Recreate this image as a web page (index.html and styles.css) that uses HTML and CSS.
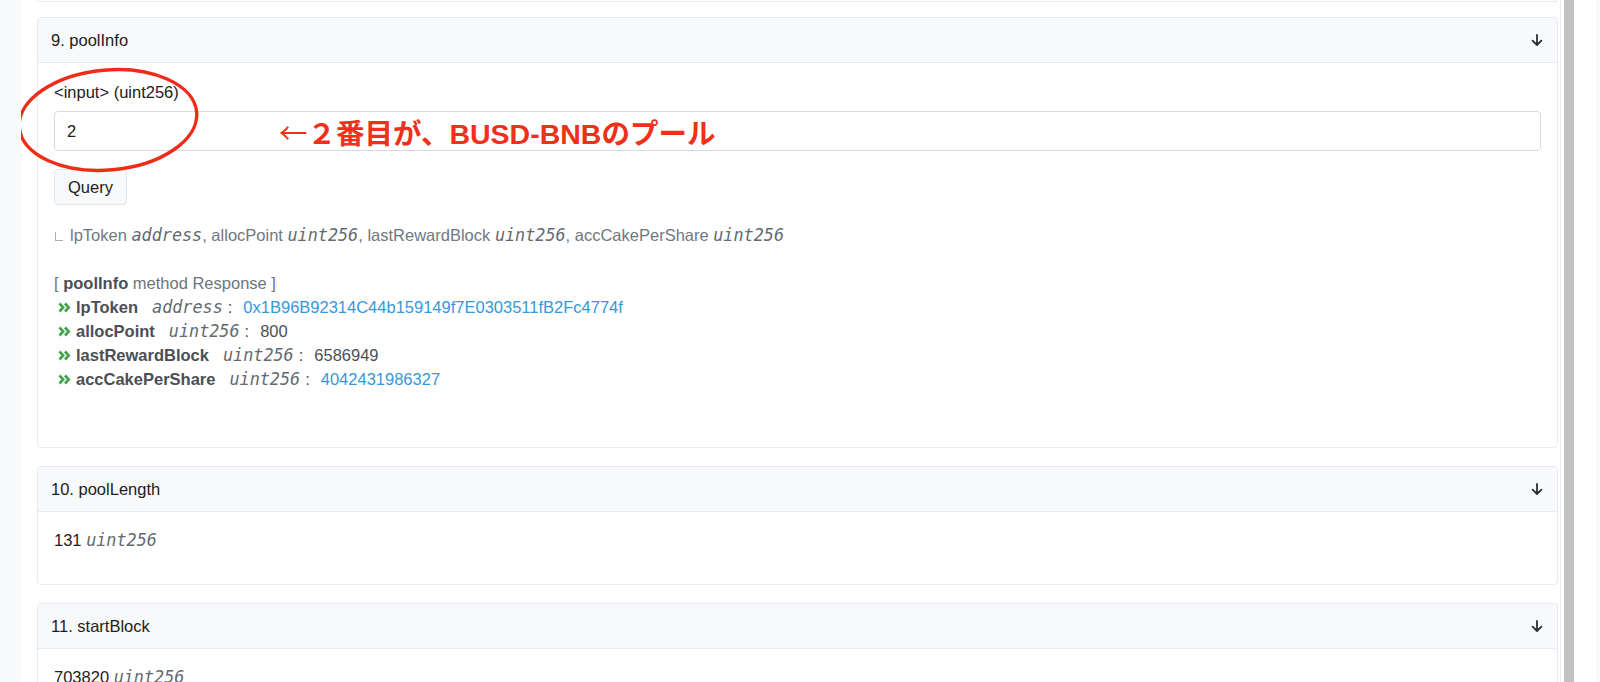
FILE: index.html
```html
<!DOCTYPE html>
<html lang="ja">
<head>
<meta charset="utf-8">
<title>Read Contract</title>
<link rel="stylesheet" href="styles.css">
</head>
<body>
<div class="page">
  <div class="content">
    <div class="card-prev"></div>

    <div class="card card-pool">
      <div class="card-head">
        <span>9. poolInfo</span>
        <svg class="arrow" width="12" height="12" viewBox="0 0 12 12"><path d="M6 1V11M1.6 6.6L6 11L10.4 6.6" fill="none" stroke="#2b2f33" stroke-width="1.8" stroke-linecap="round" stroke-linejoin="round"/></svg>
      </div>
      <div class="card-body body-pool">
        <div class="label">&lt;input&gt; (uint256)</div>
        <div class="input">2</div>
        <div class="btn">Query</div>
        <div class="sig"><span class="corner"></span>lpToken <i class="mono">address</i>, allocPoint <i class="mono">uint256</i>, lastRewardBlock <i class="mono">uint256</i>, accCakePerShare <i class="mono">uint256</i></div>
        <div class="blank"></div>
        <div class="resp-head">[ <b>poolInfo</b> method Response ]</div>
        <div class="row"><svg class="chev" width="13" height="11" viewBox="0 0 13 11"><path d="M1.5 1.5L5.2 5.5L1.5 9.5M7 1.5L10.7 5.5L7 9.5" fill="none" stroke="#3fa34d" stroke-width="2.6"/></svg><b class="rname">lpToken</b><i class="mono ty">address</i><span class="colon">:</span><span class="link">0x1B96B92314C44b159149f7E0303511fB2Fc4774f</span></div>
        <div class="row"><svg class="chev" width="13" height="11" viewBox="0 0 13 11"><path d="M1.5 1.5L5.2 5.5L1.5 9.5M7 1.5L10.7 5.5L7 9.5" fill="none" stroke="#3fa34d" stroke-width="2.6"/></svg><b class="rname">allocPoint</b><i class="mono ty">uint256</i><span class="colon">:</span><span class="val">800</span></div>
        <div class="row"><svg class="chev" width="13" height="11" viewBox="0 0 13 11"><path d="M1.5 1.5L5.2 5.5L1.5 9.5M7 1.5L10.7 5.5L7 9.5" fill="none" stroke="#3fa34d" stroke-width="2.6"/></svg><b class="rname">lastRewardBlock</b><i class="mono ty">uint256</i><span class="colon">:</span><span class="val">6586949</span></div>
        <div class="row"><svg class="chev" width="13" height="11" viewBox="0 0 13 11"><path d="M1.5 1.5L5.2 5.5L1.5 9.5M7 1.5L10.7 5.5L7 9.5" fill="none" stroke="#3fa34d" stroke-width="2.6"/></svg><b class="rname">accCakePerShare</b><i class="mono ty">uint256</i><span class="colon">:</span><span class="link">4042431986327</span></div>
      </div>
      <svg class="ring" width="200" height="120" viewBox="0 0 200 120"><ellipse cx="100" cy="60" rx="89" ry="50" transform="rotate(-5 100 60)" fill="none" stroke="#ee2c18" stroke-width="3.4"/></svg>
      <div class="note"><span class="note-arrow">←</span>２番目が、BUSD-BNBのプール</div>
    </div>

    <div class="card card-len">
      <div class="card-head">
        <span>10. poolLength</span>
        <svg class="arrow" width="12" height="12" viewBox="0 0 12 12"><path d="M6 1V11M1.6 6.6L6 11L10.4 6.6" fill="none" stroke="#2b2f33" stroke-width="1.8" stroke-linecap="round" stroke-linejoin="round"/></svg>
      </div>
      <div class="card-body body-len">131 <i class="mono">uint256</i></div>
    </div>

    <div class="card card-start">
      <div class="card-head">
        <span>11. startBlock</span>
        <svg class="arrow" width="12" height="12" viewBox="0 0 12 12"><path d="M6 1V11M1.6 6.6L6 11L10.4 6.6" fill="none" stroke="#2b2f33" stroke-width="1.8" stroke-linecap="round" stroke-linejoin="round"/></svg>
      </div>
      <div class="card-body body-start">703820 <i class="mono">uint256</i></div>
    </div>
  </div>
  <div class="track"><div class="thumb"></div></div>
</div>
</body>
</html>
```

FILE: styles.css
```css
html, body {
  margin: 0;
  padding: 0;
  height: 682px;
  overflow: hidden;
}
body {
  background: #f8f9fa;
  font-family: "Liberation Sans", Arial, sans-serif;
  font-size: 16.5px;
  line-height: 24px;
  color: #1e2022;
}
.page {
  margin: 0 4px 0 21px;
  height: 682px;
  background: #ffffff;
  display: flex;
  padding-right: 19px;
}
.content {
  flex: 1;
  padding: 0 2px 0 16px;
  overflow: hidden;
}
.track {
  width: 13px;
  border-left: 1px solid #ececec;
  padding-left: 3px;
  display: flex;
}
.thumb {
  width: 10px;
  background: #c2c2c2;
}
.card-prev {
  height: 1px;
  border: 1px solid #e7eaf3;
  border-top: none;
  border-radius: 0 0 4px 4px;
  margin-bottom: 15px;
}
.card {
  position: relative;
  border: 1px solid #e7eaf3;
  border-radius: 4px;
  margin-bottom: 18px;
  background: #fff;
}
.card-head {
  height: 44px;
  background: #f8f9fa;
  border-bottom: 1px solid #e7eaf3;
  border-radius: 4px 4px 0 0;
  display: flex;
  align-items: center;
  justify-content: space-between;
  padding: 0 14px 0 13px;
  color: #1e2022;
}
.arrow { display: block; }
.card-body {
  padding: 0 16px;
}
.body-pool {
  padding-top: 17px;
  padding-bottom: 56px;
}
.label {
  margin-bottom: 7px;
}
.input {
  height: 38px;
  border: 1px solid #d5dae2;
  border-radius: 4px;
  padding: 0 12px;
  line-height: 38px;
}
.btn {
  display: inline-block;
  margin-top: 18px;
  height: 34px;
  line-height: 34px;
  padding: 0 13px;
  border: 1px solid #e3e6ea;
  border-radius: 4px;
  background: #f8f9fa;
  color: #1e2022;
  vertical-align: top;
}
.sig {
  margin-top: 18px;
  color: #6f7882;
}
.corner {
  display: inline-block;
  width: 7px;
  height: 8px;
  border-left: 1px solid #a7afb8;
  border-bottom: 1px solid #a7afb8;
  margin: 0 7px 0 1px;
}
.mono {
  font-family: "DejaVu Sans Mono", "Liberation Mono", monospace;
  font-style: italic;
  font-size: 16.8px;
  color: #62696f;
}
.blank { height: 24px; }
.resp-head {
  color: #6c757d;
}
.resp-head b {
  color: #4a4f55;
}
.row {
  color: #5a5f66;
  padding-left: 4px;
  display: flex;
  align-items: center;
  white-space: nowrap;
}
.chev {
  display: block;
  margin-right: 5px;
}
.rname {
  color: #4a4f55;
}
.ty {
  margin-left: 14px;
}
.colon {
  margin-left: 5px;
  margin-right: 11px;
  color: #4a4f55;
}
.link {
  color: #3498db;
}
.val {
  color: #4a4f55;
}
.ring {
  position: absolute;
  left: -30px;
  top: 42px;
}
.note {
  position: absolute;
  left: 241px;
  top: 97px;
  font-family: "Liberation Sans", "Noto Sans CJK JP", sans-serif;
  font-weight: bold;
  font-size: 28.5px;
  line-height: 34px;
  color: #f0301a;
  white-space: nowrap;
}
.note-arrow {
  font-family: "Noto Sans CJK JP", sans-serif;
  font-weight: normal;
}
.body-len {
  padding-top: 16px;
  padding-bottom: 32px;
}
.body-start {
  padding-top: 16px;
  padding-bottom: 32px;
}
```
